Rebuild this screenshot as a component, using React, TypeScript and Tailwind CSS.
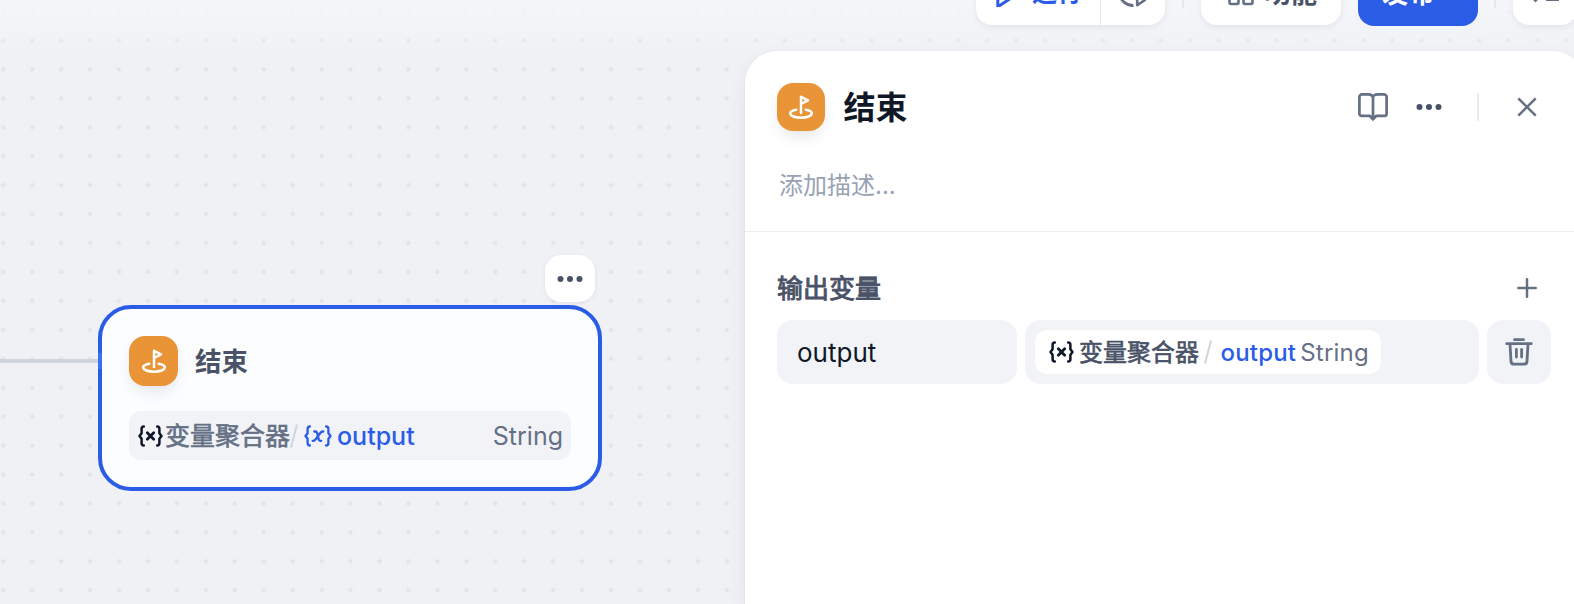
import React from 'react';
import clsx from 'clsx';

const PlayIcon = () => (
  <svg className="w-7 h-7" viewBox="0 0 28 28" fill="none" stroke="currentColor" strokeWidth="3" strokeLinejoin="round">
    <path d="M4.8 2.5v25.300L25 14.500z" />
  </svg>
);

const HistoryIcon = () => (
  <svg className="w-8 h-8" viewBox="0 0 32 32" fill="none" stroke="currentColor" strokeWidth="3" strokeLinejoin="round" strokeLinecap="round">
    <path d="M16.5 28.500A13 13 0 1 1 28.500 13" strokeLinecap="butt" />
    <path d="M20.2 17.5v10.800l7.800-5.400z" strokeWidth="2.6" />
  </svg>
);

const FeaturesIcon = () => (
  <svg className="w-[26px] h-[26px]" viewBox="0 0 26 26" fill="none" stroke="currentColor" strokeWidth="2.6">
    <rect x="1.5" y="1.5" width="9" height="9" rx="1.5" />
    <circle cx="20.5" cy="6" r="4.5" />
    <rect x="1.5" y="15" width="9" height="9" rx="1.5" />
    <rect x="15.5" y="15" width="9" height="9" rx="1.5" />
  </svg>
);

const ChecklistIcon = () => (
  <svg className="w-8 h-8" viewBox="0 0 32 32" fill="none" stroke="currentColor" strokeWidth="2.8">
    <path d="M2 19l4.5 4.5L14 15M17 10h12M17 22.5h13" />
  </svg>
);

const FlagIcon = () => (
  <svg className="w-6 h-6" viewBox="0 0 24 24" fill="none" stroke="#fff" strokeWidth="2.5" strokeLinecap="round" strokeLinejoin="round">
    <path d="M12 18V1.8l7 3.6-7 3.6" />
    <path d="M7.2 14.7c-3.7.7-6 2-6 3.6 0 2.6 4.8 4.4 10.8 4.4s10.8-1.8 10.8-4.4c0-1.6-2.3-2.9-6-3.6" />
  </svg>
);

const BookIcon = () => (
  <svg className="w-8 h-8" viewBox="0 0 32 32" fill="none" stroke="currentColor" strokeWidth="2.7" strokeLinejoin="round" strokeLinecap="round">
    <path d="M16 28.500v-21.500c0-2-2-3.700-4.500-3.700H5.200a2.800 2.800 0 0 0-2.800 2.800v16.700a2 2 0 0 0 2 2h8.200L16 28.200l3.400-3.400h8.200a2 2 0 0 0 2-2V6.100a2.800 2.800 0 0 0-2.800-2.800h-6.300C18 3.300 16 5 16 7" />
  </svg>
);

const DotsIcon = () => (
  <svg className="w-7 h-2" viewBox="0 0 28 8" fill="currentColor">
    <circle cx="4.500" cy="4" r="3" />
    <circle cx="14" cy="4" r="3" />
    <circle cx="23.500" cy="4" r="3" />
  </svg>
);

const CloseIcon = () => (
  <svg className="w-5 h-5" viewBox="0 0 20 20" fill="none" stroke="currentColor" strokeWidth="2.6">
    <path d="M1.300 1.300l17.400 17.400M18.700 1.300L1.300 18.700" />
  </svg>
);

const PlusIcon = () => (
  <svg className="w-5 h-5" viewBox="0 0 20 20" fill="none" stroke="currentColor" strokeWidth="2.5" strokeLinecap="round">
    <path d="M10 1.300v17.400M1.300 10h17.400" />
  </svg>
);

const TrashIcon = () => (
  <svg className="w-7 h-7" viewBox="0 0 28 28" fill="none" stroke="currentColor" strokeWidth="2.800" strokeLinecap="round" strokeLinejoin="round">
    <path d="M9.500 1.700h9M1.700 5.700h24.600M5 6l1 17.500a3 3 0 0 0 3 2.700h10a3 3 0 0 0 3-2.700L23 6M11.400 11.500v7.500M16.600 11.500v7.500" />
  </svg>
);

const AggregatorIcon = () => (
  <svg className="w-[25px] h-[22px] shrink-0" viewBox="0 0 25 22" fill="none" stroke="#101828" strokeWidth="2.5" strokeLinecap="round" strokeLinejoin="round">
    <path d="M5.800 1.500C4 1.500 3.600 2.500 3.600 4v4.200L1.500 11l2.100 2.800V18c0 1.500.4 2.500 2.200 2.500M19.200 1.500c1.800 0 2.200 1 2.200 2.500v4.200l2.100 2.800-2.100 2.800V18c0 1.500-.4 2.500-2.200 2.500" />
    <path d="M9.300 7.800l6.400 6.400M15.700 7.800l-6.400 6.400" strokeWidth="2.800" />
  </svg>
);

const VariableIcon = () => (
  <svg className="w-[28px] h-[22px] shrink-0" viewBox="0 0 28 22" fill="none" stroke="currentColor" strokeWidth="2.3" strokeLinecap="round" strokeLinejoin="round">
    <path d="M5.900 1.500C4.100 1.500 3.600 2.500 3.600 4v4.200L1.500 11l2.100 2.800V18c0 1.500.500 2.500 2.300 2.500M22.100 1.500c1.800 0 2.300 1 2.300 2.500v4.200l2.100 2.800-2.100 2.800V18c0 1.500-.500 2.500-2.300 2.500" />
    <path d="M10.300 6.500h1c1.100 0 1.600.6 1.900 1.600l1.500 6.200c.3 1 .8 1.500 1.700 1.500h.8M19.300 6.500h-.5c-1 0-1.700.5-2.500 1.500l-4.600 6.300c-.8 1-1.500 1.500-2.500 1.500h-.5" />
  </svg>
);

const Slash = ({ className }: { className?: string }) => (
  <svg className={clsx('w-2 h-6 shrink-0', className)} viewBox="0 0 8 24" fill="none" stroke="#d0d5dc" strokeWidth="2">
    <path d="M7 .5L1 23.500" />
  </svg>
);

const EndBadge = ({ className }: { className: string }) => (
  <div className={clsx('flex shrink-0 items-center justify-center rounded-2xl bg-[#e99537] shadow-[0_8px_16px_-4px_rgba(16,24,40,0.12)]', className)}>
    <FlagIcon />
  </div>
);

const Toolbar = () => (
  <header className="flex h-[90px] -mt-[39px] pl-[976px] text-[26px] font-bold">
    <div className="flex h-16 w-[189px] shrink-0 rounded-2xl bg-white shadow-[0_2px_6px_rgba(16,24,40,0.07)]">
      <div className="flex w-[125px] items-center border-r border-[#e4e6eb] pl-[17px] text-[#2b5ce8]">
        <PlayIcon />
        <span className="ml-[11px] text-[25px]">运行</span>
      </div>
      <div className="flex flex-1 items-center justify-center text-[#667085]">
        <HistoryIcon />
      </div>
    </div>
    <div className="ml-[17px] mt-[19px] h-7 w-0.5 shrink-0 bg-[#e6e8ed]" />
    <div className="ml-[17px] flex h-16 w-[140px] shrink-0 items-center rounded-2xl bg-white pl-[27px] text-[#495267] shadow-[0_2px_6px_rgba(16,24,40,0.07)]">
      <span className="text-[#667085]"><FeaturesIcon /></span>
      <span className="ml-[11px]">功能</span>
    </div>
    <div className="ml-[17px] flex h-[65px] w-[120px] shrink-0 items-center rounded-2xl bg-[#2b5ce6] pl-6 text-white">
      发布
    </div>
    <div className="ml-4 mt-[19px] h-7 w-0.5 shrink-0 bg-[#e6e8ed]" />
    <div className="ml-[17px] flex h-16 w-16 shrink-0 items-center justify-center rounded-2xl bg-white text-[#667085] shadow-[0_2px_6px_rgba(16,24,40,0.07)]">
      <ChecklistIcon />
    </div>
  </header>
);

const EndNode = () => (
  <>
    {/* Incoming edge */}
    <div className="absolute left-0 top-[308px] h-1 w-[98px] bg-[#d0d4dc]" />

    <button className="absolute left-[545px] top-[204px] flex h-[47px] w-[50px] items-center justify-center rounded-2xl bg-white text-[#495267] shadow-[0_1px_4px_rgba(16,24,40,0.07)]">
      <DotsIcon />
    </button>

    <div className="absolute left-[97.5px] top-[254px] h-[186px] w-[504.500px] rounded-[33px] border-4 border-[#2b5ce6] bg-[#fcfdff] pl-[27.500px] pr-[27px] pt-[27px]">
      <div className="flex items-center">
        <EndBadge className="h-[50px] w-[49px]" />
        <span className="ml-[17px] text-[26.500px] font-bold leading-8 text-[#495267]">结束</span>
      </div>
      <div className="mt-[25px] flex h-[49px] items-center rounded-xl bg-[#f2f3f7] pl-[9px] pr-[8px] text-[25px]">
        <AggregatorIcon />
        <span className="relative top-px ml-0.5 text-[#667085] [-webkit-text-stroke:0.6px]">变量聚合器</span>
        <Slash />
        <span className="ml-[6px] flex items-center font-medium text-[#2b5ce8]">
          <VariableIcon />
          <span className="relative top-px ml-[5px]">output</span>
        </span>
        <span className="relative top-px ml-auto text-[#667085]">String</span>
      </div>
      {/* Target handle */}
      <div className="absolute -left-1 top-[44px] h-4 w-1 bg-[#3b6ff5]" />
    </div>
  </>
);

const EndPanel = () => (
  <aside className="h-[553px] w-[840px] shrink-0 rounded-t-[32px] bg-white shadow-[0_0_0_1px_rgba(16,24,40,0.02),0_8px_20px_rgba(16,24,40,0.06)]">
    <div className="h-[181px] border-b border-[#eaecf0] pl-8 pt-8">
      <div className="flex h-12 items-center">
        <EndBadge className="h-12 w-12" />
        <h2 className="ml-[18.500px] pt-0.5 text-[32px] font-bold leading-10 text-[#101828]">结束</h2>
        <div className="ml-auto flex items-center pr-[48px] text-[#667085]">
          <BookIcon />
          <span className="ml-[26px] text-[#495267]"><DotsIcon /></span>
          <span className="ml-[34px] h-7 w-0.5 bg-[#e9ebf0]" />
          <span className="ml-[38px]"><CloseIcon /></span>
        </div>
      </div>
      <p className="mt-[37px] pl-0.5 text-2xl leading-9 text-[#98a2b3]">添加描述...</p>
    </div>

    <div className="pl-8 pr-[34px] pt-[36px]">
      <div className="flex h-10 items-center justify-between pr-[14px]">
        <h3 className="text-[26px] text-[#495267] [-webkit-text-stroke:0.9px]">输出变量</h3>
        <span className="text-[#667085]"><PlusIcon /></span>
      </div>
      <div className="mt-3 flex h-16 gap-2">
        <div className="flex w-[240px] items-center rounded-2xl bg-[#f2f3f7] pl-5 text-[26px] text-[#101828]">
          output
        </div>
        <div className="flex w-[454px] items-center rounded-2xl bg-[#f2f3f7] pl-2.5">
          <div className="flex h-11 w-[346px] items-center rounded-xl bg-white pl-[13.500px] text-2xl">
            <AggregatorIcon />
            <span className="ml-[5.500px] pt-0.5 text-[#495267] [-webkit-text-stroke:0.6px]">变量聚合器</span>
            <Slash className="ml-[5px]" />
            <span className="ml-[8.500px] pt-0.5 font-medium tracking-[0.200px] text-[#2b5ce8]">output</span>
            <span className="ml-1 pt-0.5 tracking-[0.200px] text-[#667085]">String</span>
          </div>
        </div>
        <div className="flex w-16 items-center justify-center rounded-2xl bg-[#f2f3f7] text-[#667085]">
          <TrashIcon />
        </div>
      </div>
    </div>
  </aside>
);

// The dot grid of the canvas
const Grid = () => (
  <svg className="absolute inset-0 h-full w-full">
    <defs>
      <pattern id="dots" x="-11.200" y="-3" width="28.940" height="28.940" patternUnits="userSpaceOnUse">
        <circle cx="14.500" cy="14.500" r="2.200" fill="#e3e4e8" />
      </pattern>
      <linearGradient id="fade" x1="0" y1="0" x2="0" y2="1">
        <stop offset="0" stopColor="#f5f6fa" />
        <stop offset="1" stopColor="#f5f6fa" stopOpacity="0" />
      </linearGradient>
    </defs>
    <rect width="100%" height="100%" fill="url(#dots)" />
    <rect width="100%" height="56" fill="url(#fade)" />
  </svg>
);

const App = () => {
  return (
    <div className="relative h-[604px] w-[1574px] overflow-hidden bg-[#f0f1f5] font-['Inter','Noto_Sans_CJK_SC',sans-serif]">
      <Grid />
      <div className="relative flex h-full flex-col">
        <Toolbar />
        <main className="flex">
          <section className="relative w-[745px] shrink-0">
            <EndNode />
          </section>
          <EndPanel />
        </main>
      </div>
    </div>
  );
};

export default App;
